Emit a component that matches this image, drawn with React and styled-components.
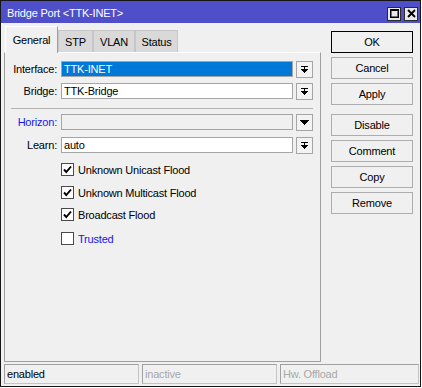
import React from 'react';
import styled, { createGlobalStyle } from 'styled-components';

const FONT = '"Liberation Sans", Arial, sans-serif';

const Global = createGlobalStyle`
  html, body { margin: 0; padding: 0; background: #ffffff; }
  body { font-family: ${FONT}; font-size: 11px; }
  * { box-sizing: border-box; }
`;

const Window = styled.div`
  width: 421px;
  height: 387px;
  border: 1px solid #161616;
  background: #f0f0f0;
  display: flex;
  flex-direction: column;
  font-family: ${FONT};
  font-size: 11px;
  letter-spacing: -0.2px;
  color: #000;
`;

const TitleBar = styled.div`
  height: 22px;
  flex: none;
  background: #4f4fc9;
  color: #fff;
  display: flex;
  align-items: center;
  padding: 0 2px 0 6px;
`;

const Title = styled.span`
  flex: 1;
  padding-top: 1px;
`;

const TitleButtons = styled.div`
  display: flex;
  gap: 3px;
  margin-top: 3px;
`;

const TitleButton = styled.div`
  width: 14px;
  height: 14px;
  background: #e9e9e9;
  border: 1px solid #2a2a2a;
  display: flex;
  align-items: center;
  justify-content: center;
`;

const Main = styled.div`
  height: 339px;
  flex: none;
  display: flex;
  padding: 3px 0 0 3px;
`;

const LeftCol = styled.div`
  width: 317px;
  display: flex;
  flex-direction: column;
`;

const TabRow = styled.div`
  height: 27px;
  display: flex;
  align-items: flex-end;
  padding-left: 1px;
  margin-bottom: -1px;
  position: relative;
  z-index: 1;
`;

const Tab = styled.div`
  width: ${p => p.$w}px;
  height: ${p => (p.$active ? 27 : 22)}px;
  margin-bottom: ${p => (p.$active ? 0 : 1)}px;
  display: flex;
  align-items: center;
  justify-content: center;
  background: ${p => (p.$active ? '#f0f0f0' : '#d9d9d9')};
  border: 1px solid ${p => (p.$active ? '#ffffff' : '#c6c6c6')};
  border-right-color: ${p => (p.$active ? '#a0a0a0' : '#c6c6c6')};
  border-bottom: none;
  padding-top: ${p => (p.$active ? 0 : 1)}px;
`;

const Panel = styled.div`
  height: 310px;
  border: 1px solid #a0a0a0;
  border-top-color: #ffffff;
  background: #f0f0f0;
  padding-top: 8px;
  display: flex;
  flex-direction: column;
`;

const Row = styled.div`
  height: 16px;
  display: flex;
  align-items: center;
  margin-top: ${p => p.$gap || 0}px;
`;

const Label = styled.div`
  width: 52px;
  text-align: right;
  margin-right: 4px;
  color: ${p => (p.$blue ? '#1515f0' : '#000')};
  white-space: nowrap;
`;

const Field = styled.div`
  width: 232px;
  height: 16px;
  border: 1px solid #a5a5a5;
  background: ${p => (p.$selected ? '#0078d7' : p.$disabled ? '#f0f0f0' : '#ffffff')};
  color: ${p => (p.$selected ? '#ffffff' : '#000')};
  padding-left: 2px;
  display: flex;
  align-items: center;
  line-height: 14px;
  white-space: nowrap;
`;

const DropButton = styled.div`
  width: 17px;
  height: 17px;
  margin-left: 3px;
  border: 1px solid #a5a5a5;
  background: #f3f3f3;
  display: flex;
  align-items: center;
  justify-content: center;
`;

const Separator = styled.div`
  height: 1px;
  margin: 9px 0 5px 6px;
  width: 302px;
  background: #b4b4b4;
`;

const CheckRow = styled.div`
  display: flex;
  align-items: center;
  height: 13px;
  margin-top: ${p => p.$gap}px;
  padding-left: 56px;
  color: ${p => (p.$blue ? '#1515f0' : '#000')};
`;

const Box = styled.div`
  width: 13px;
  height: 13px;
  border: 1px solid #4a4a4a;
  background: #fff;
  margin-right: 4px;
  display: flex;
  align-items: center;
  justify-content: center;
`;

const RightCol = styled.div`
  margin-left: 10px;
  padding-top: 5px;
  display: flex;
  flex-direction: column;
`;

const Button = styled.div`
  width: 82px;
  height: 22px;
  margin-top: ${p => p.$gap || 0}px;
  border: 1px solid ${p => (p.$default ? '#000' : '#adadad')};
  background: #f0f0f0;
  display: flex;
  align-items: center;
  justify-content: center;
`;

const StatusBar = styled.div`
  height: 20px;
  margin-top: 2px;
  padding-left: 3px;
  display: flex;
  gap: 3px;
`;

const StatusCell = styled.div`
  width: ${p => p.$w}px;
  height: 20px;
  border: 1px solid #c4c4c4;
  border-left-color: #a0a0a0;
  border-top-color: #a0a0a0;
  padding-left: 2px;
  display: flex;
  align-items: center;
  color: ${p => (p.$muted ? '#a8a8a8' : '#000')};
`;

const ComboIcon = () => (
  <svg width="7" height="7" viewBox="0 0 7 7" shapeRendering="crispEdges">
    <rect x="0" y="0" width="7" height="1" fill="#000" />
    <rect x="3" y="1" width="1" height="2" fill="#000" />
    <rect x="0" y="3" width="7" height="1" fill="#000" />
    <rect x="1" y="4" width="5" height="1" fill="#000" />
    <rect x="2" y="5" width="3" height="1" fill="#000" />
    <rect x="3" y="6" width="1" height="1" fill="#000" />
  </svg>
);

const ArrowIcon = () => (
  <svg width="9" height="5" viewBox="0 0 9 5" shapeRendering="crispEdges">
    <rect x="0" y="0" width="9" height="1" fill="#000" />
    <rect x="1" y="1" width="7" height="1" fill="#000" />
    <rect x="2" y="2" width="5" height="1" fill="#000" />
    <rect x="3" y="3" width="3" height="1" fill="#000" />
    <rect x="4" y="4" width="1" height="1" fill="#000" />
  </svg>
);

const Check = () => (
  <svg width="11" height="11" viewBox="0 0 11 11">
    <path d="M2 5.5l2.3 2.5L9 2.5" fill="none" stroke="#000" strokeWidth="1.9" />
  </svg>
);

const MaxIcon = () => (
  <svg width="9" height="9" viewBox="0 0 9 9">
    <rect x="0.75" y="1" width="7.5" height="7.25" fill="none" stroke="#000" strokeWidth="1.5" />
    <rect x="0" y="0" width="9" height="2" fill="#000" />
  </svg>
);

const CloseIcon = () => (
  <svg width="9" height="9" viewBox="0 0 9 9">
    <path d="M1 1l7 7M8 1L1 8" stroke="#000" strokeWidth="1.8" />
  </svg>
);

const tabs = [
  { label: 'General', w: 53, active: true },
  { label: 'STP', w: 35 },
  { label: 'VLAN', w: 42 },
  { label: 'Status', w: 43 },
];

const buttons = [
  { label: 'OK', def: true },
  { label: 'Cancel', gap: 4 },
  { label: 'Apply', gap: 4 },
  { label: 'Disable', gap: 9 },
  { label: 'Comment', gap: 4 },
  { label: 'Copy', gap: 4 },
  { label: 'Remove', gap: 4 },
];

const checks = [
  { label: 'Unknown Unicast Flood', checked: true, gap: 10 },
  { label: 'Unknown Multicast Flood', checked: true, gap: 10 },
  { label: 'Broadcast Flood', checked: true, gap: 9 },
  { label: 'Trusted', checked: false, gap: 11, blue: true },
];

export default function App() {
  return (
    <>
      <Global />
      <Window>
        <TitleBar>
          <Title>Bridge Port &lt;TTK-INET&gt;</Title>
          <TitleButtons>
            <TitleButton><MaxIcon /></TitleButton>
            <TitleButton><CloseIcon /></TitleButton>
          </TitleButtons>
        </TitleBar>
        <Main>
          <LeftCol>
            <TabRow>
              {tabs.map(t => (
                <Tab key={t.label} $w={t.w} $active={t.active}>{t.label}</Tab>
              ))}
            </TabRow>
            <Panel>
              <Row>
                <Label>Interface:</Label>
                <Field $selected>TTK-INET</Field>
                <DropButton><ComboIcon /></DropButton>
              </Row>
              <Row $gap={6}>
                <Label>Bridge:</Label>
                <Field>TTK-Bridge</Field>
                <DropButton><ComboIcon /></DropButton>
              </Row>
              <Separator />
              <Row>
                <Label $blue>Horizon:</Label>
                <Field $disabled />
                <DropButton><ArrowIcon /></DropButton>
              </Row>
              <Row $gap={7}>
                <Label>Learn:</Label>
                <Field>auto</Field>
                <DropButton><ComboIcon /></DropButton>
              </Row>
              {checks.map(c => (
                <CheckRow key={c.label} $gap={c.gap} $blue={c.blue}>
                  <Box>{c.checked && <Check />}</Box>
                  {c.label}
                </CheckRow>
              ))}
            </Panel>
          </LeftCol>
          <RightCol>
            {buttons.map(b => (
              <Button key={b.label} $default={b.def} $gap={b.gap}>{b.label}</Button>
            ))}
          </RightCol>
        </Main>
        <StatusBar>
          <StatusCell $w={135}>enabled</StatusCell>
          <StatusCell $w={135} $muted>inactive</StatusCell>
          <StatusCell $w={139} $muted>Hw. Offload</StatusCell>
        </StatusBar>
      </Window>
    </>
  );
}
